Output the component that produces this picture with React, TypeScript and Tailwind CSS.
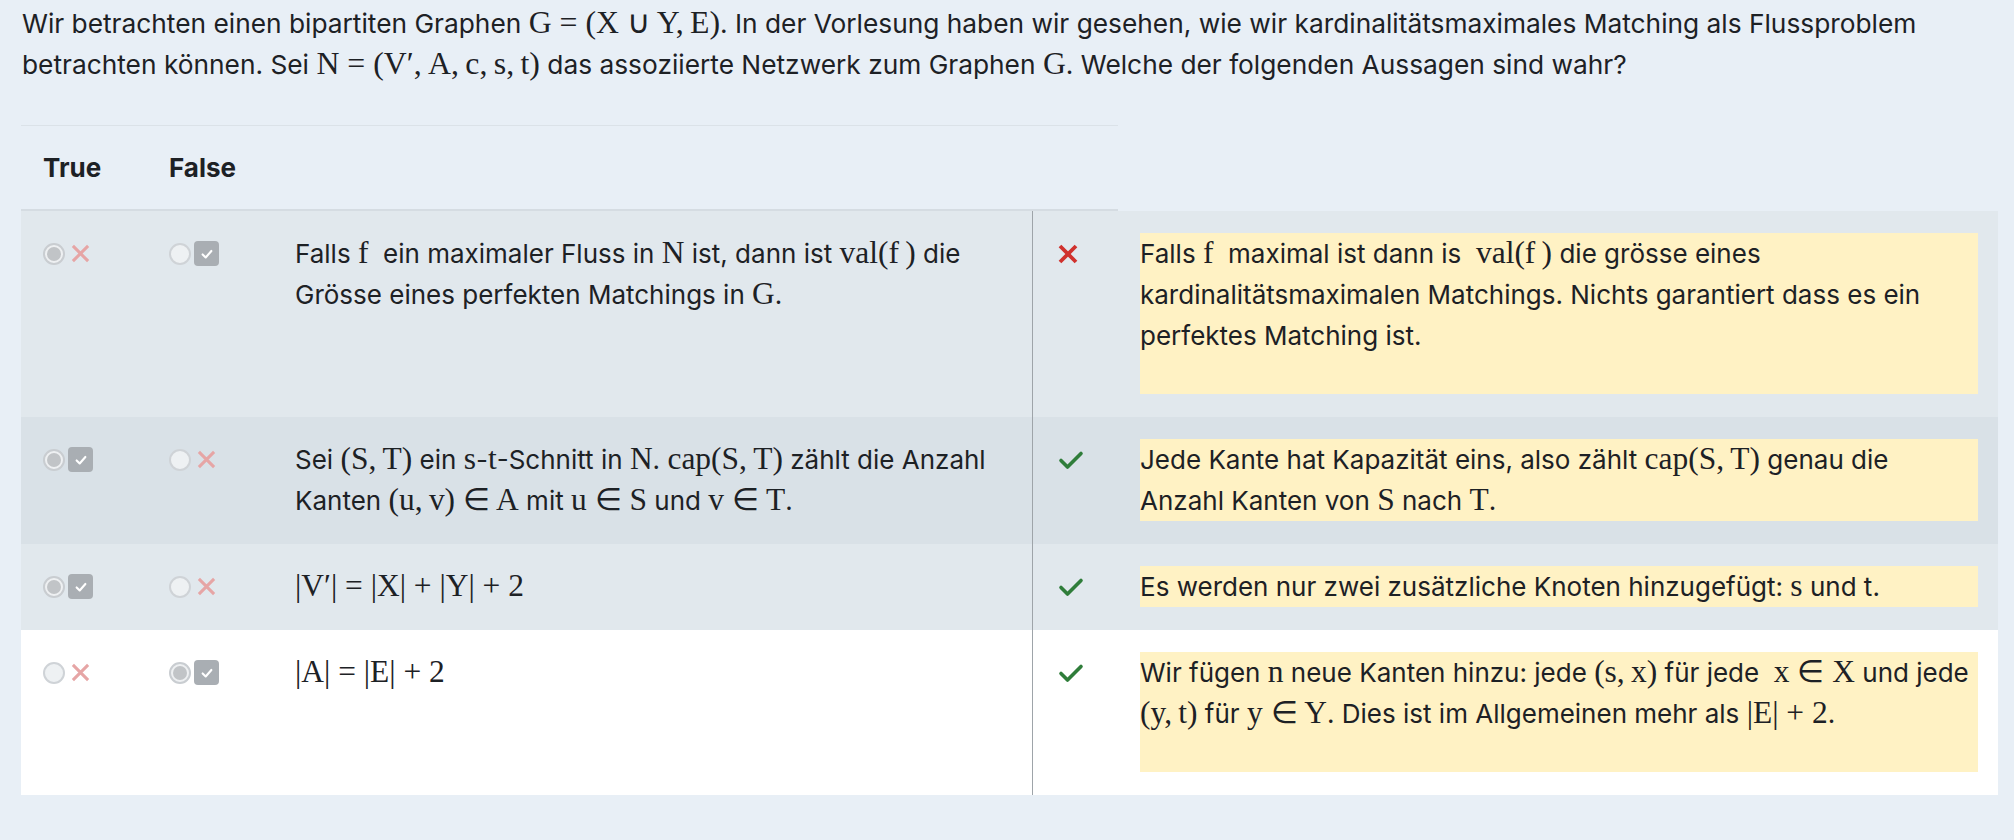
import type { ReactNode } from "react";

const M = ({ children }: { children: ReactNode }) => (
  <span className="font-['Liberation_Serif',serif] text-[1.21em] leading-none">{children}</span>
);

const Radio = ({ checked }: { checked: boolean }) =>
  checked ? (
    <span className="flex h-[22px] w-[22px] shrink-0 items-center justify-center rounded-full border-2 border-[#c9cdd1] bg-[#eef0f2]">
      <span className="h-[14px] w-[14px] rounded-full bg-[#c1c4c7]" />
    </span>
  ) : (
    <span className="h-[22px] w-[22px] shrink-0 rounded-full border-2 border-[#cfd3d7] bg-[#eef1f3]" />
  );

const FadedX = () => (
  <span className="flex h-[25px] w-[25px] items-center justify-center">
    <svg width="19" height="19" viewBox="0 0 20 20" fill="none" stroke="#e6a5a5" strokeWidth="3.2">
      <path d="M2 2 18 18M18 2 2 18" />
    </svg>
  </span>
);

const CheckBox = () => (
  <span className="flex h-[25px] w-[25px] items-center justify-center rounded-[4px] bg-[#a9aeb3]">
    <svg width="14" height="14" viewBox="0 0 16 16" fill="none" stroke="#ffffff" strokeWidth="2.4" strokeLinecap="round" strokeLinejoin="round">
      <path d="M3 8.5 6.5 12 13 4.5" />
    </svg>
  </span>
);

const Choice = ({ selected, correct }: { selected: boolean; correct: boolean }) => (
  <div className="flex h-[41px] items-center gap-[3px]">
    <Radio checked={selected} />
    {correct ? <CheckBox /> : <FadedX />}
  </div>
);

const Mark = ({ ok }: { ok: boolean }) =>
  ok ? (
    <svg width="26" height="20" viewBox="0 0 26 20" fill="none" stroke="#2f7d3a" strokeWidth="3.6" strokeLinecap="round" strokeLinejoin="round">
      <path d="M3 10.5 9.5 17 23 3.5" />
    </svg>
  ) : (
    <svg width="20" height="20" viewBox="0 0 20 20" fill="none" stroke="#d0312d" strokeWidth="3.8">
      <path d="M2 2 18 18M18 2 2 18" />
    </svg>
  );

type Row = {
  answer: "true" | "false";
  picked: "true" | "false";
  bg: string;
  extra: boolean;
  statement: ReactNode;
  feedback: ReactNode;
};

const rows: Row[] = [
  {
    answer: "false",
    picked: "true",
    bg: "bg-[#e1e8ed]",
    extra: true,
    statement: (
      <>
        Falls <M>f</M>&nbsp; ein maximaler Fluss in <M>N</M> ist, dann ist <M>val(f&thinsp;)</M> die
        <br />
        Grösse eines perfekten Matchings in <M>G</M>.
      </>
    ),
    feedback: (
      <>
        Falls <M>f</M>&nbsp; maximal ist dann is&nbsp; <M>val(f&thinsp;)</M> die grösse eines
        <br />
        kardinalitätsmaximalen Matchings. Nichts garantiert dass es ein
        <br />
        perfektes Matching ist.
      </>
    ),
  },
  {
    answer: "true",
    picked: "true",
    bg: "bg-[#d9e1e7]",
    extra: false,
    statement: (
      <>
        Sei <M>(S,&thinsp;T)</M> ein <M>s</M>-<M>t</M>-Schnitt in <M>N</M>. <M>cap(S,&thinsp;T)</M> zählt die Anzahl
        <br />
        Kanten <M>(u,&thinsp;v) ∈ A</M> mit <M>u ∈ S</M> und <M>v ∈ T</M>.
      </>
    ),
    feedback: (
      <>
        Jede Kante hat Kapazität eins, also zählt <M>cap(S,&thinsp;T)</M> genau die
        <br />
        Anzahl Kanten von <M>S</M> nach <M>T</M>.
      </>
    ),
  },
  {
    answer: "true",
    picked: "true",
    bg: "bg-[#e1e8ed]",
    extra: false,
    statement: <M>|V′| = |X| + |Y| + 2</M>,
    feedback: (
      <>
        Es werden nur zwei zusätzliche Knoten hinzugefügt: <M>s</M> und t.
      </>
    ),
  },
  {
    answer: "false",
    picked: "false",
    bg: "bg-white",
    extra: true,
    statement: <M>|A| = |E| + 2</M>,
    feedback: (
      <>
        Wir fügen <M>n</M> neue Kanten hinzu: jede <M>(s,&thinsp;x)</M> für jede&nbsp; <M>x ∈ X</M> und jede
        <br />
        <M>(y,&thinsp;t)</M> für <M>y ∈ Y</M>. Dies ist im Allgemeinen mehr als <M>|E| + 2</M>.
      </>
    ),
  },
];

export default function App() {
  return (
    <div className="min-h-screen bg-[#e8eff6] pb-[48px] font-['Inter',sans-serif] text-[26px] leading-[41px] text-[#1d2125]">
      <p className="px-[22px] pt-[3px] text-[26.3px]">
        Wir betrachten einen bipartiten Graphen <M>G = (X ∪ Y,&thinsp;E)</M>. In der Vorlesung haben wir gesehen, wie wir
        kardinalitätsmaximales Matching als Flussproblem
        <br />
        betrachten können. Sei <M>N = (V′,&thinsp;A,&thinsp;c,&thinsp;s,&thinsp;t)</M> das assoziierte Netzwerk zum Graphen{" "}
        <M>G</M>. Welche der folgenden Aussagen sind wahr?
      </p>

      <div className="ml-[21px] mr-[16px] mt-[40px]">
        <div className="grid h-[86px] w-[1097px] grid-cols-[126px_126px_1fr] items-center border-t border-b-2 border-t-[#dbe2e8] border-b-[#d5dce2] font-bold">
          <div className="px-[22px]">True</div>
          <div className="px-[22px]">False</div>
          <div />
        </div>

        {rows.map((r, i) => (
          <div key={i} className={`grid grid-cols-[126px_126px_759px_86px_1fr] ${r.bg}`}>
            <div className="px-[22px] pt-[22px]">
              <Choice selected={r.picked === "true"} correct={r.answer === "true"} />
            </div>
            <div className="px-[22px] pt-[22px]">
              <Choice selected={r.picked === "false"} correct={r.answer === "false"} />
            </div>
            <div className="px-[22px] pt-[22px]">{r.statement}</div>
            <div className="border-l border-[#9ea4a9] pl-[25px] pt-[22px]">
              <div className="flex h-[41px] items-center">
                <Mark ok={r.picked === r.answer} />
              </div>
            </div>
            <div className="pb-[23px] pl-[22px] pr-[20px] pt-[22px]">
              <div className={`bg-[#fff2c4] ${r.extra ? "pb-[38px]" : ""}`}>{r.feedback}</div>
            </div>
          </div>
        ))}
      </div>
    </div>
  );
}
